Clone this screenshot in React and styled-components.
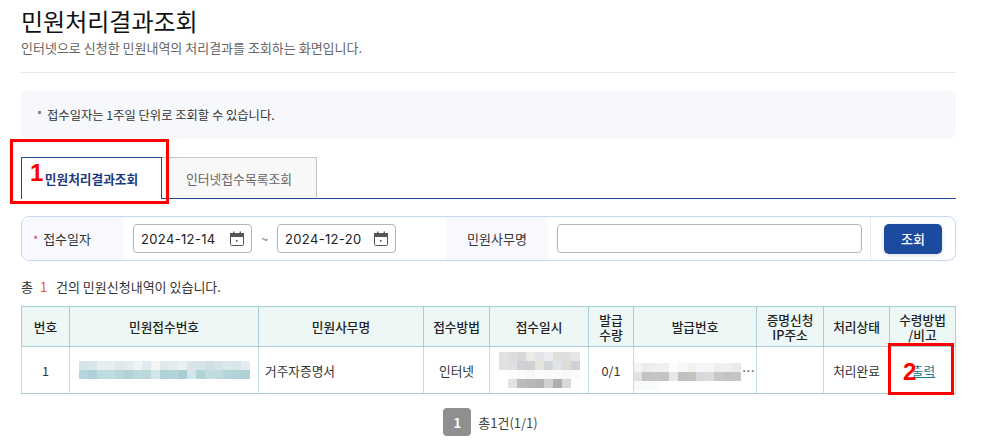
import React from "react";
import styled, { createGlobalStyle } from "styled-components";

const Global = createGlobalStyle`
  html, body { margin: 0; padding: 0; background: #fff; }
  body { font-family: "Noto Sans CJK KR", "Noto Sans", sans-serif; color: #333; }
`;
const Page = styled.div`
  position: relative;
  width: 985px;
  height: 445px;
  overflow: hidden;
  padding: 0 29px 0 21px;
  box-sizing: border-box;
`;
const Title = styled.h1`
  margin: 0;
  padding-top: 3px;
  font-size: 24px;
  line-height: 36px;
  font-weight: 400;
  color: #111;
`;
const Sub = styled.p`
  margin: 0;
  font-size: 13px;
  line-height: 18px;
  color: #666;
`;
const Rule = styled.hr`
  margin: 15px 0 0;
  border: 0;
  border-top: 1px solid #e6e6e6;
`;
const Info = styled.div`
  margin-top: 17px;
  height: 49px;
  background: #f7f8fc;
  border-radius: 8px;
  display: flex;
  align-items: center;
  padding-left: 17px;
  gap: 6px;
  font-size: 12.3px;
  color: #333;
`;
const Dot = styled.span`
  width: 3px;
  height: 3px;
  background: #888;
  margin-bottom: 4px;
`;
const Tabs = styled.div`
  margin-top: 18px;
  height: 42px;
  display: flex;
  box-sizing: border-box;
  border-bottom: 1px solid #1c4a9f;
`;
const Tab = styled.div`
  height: 42px;
  box-sizing: border-box;
  display: flex;
  align-items: center;
  justify-content: center;
  border: 1px solid ${p => (p.$active ? "#1c4a9f" : "#c4c4c4")};
  border-left-width: ${p => (p.$active ? "1px" : "0")};
  border-bottom: ${p => (p.$active ? "0" : "1px solid #1c4a9f")};
  background: ${p => (p.$active ? "#fff" : "#f8f8f8")};
  color: ${p => (p.$active ? "#1c3a80" : "#666")};
  font-size: ${p => (p.$active ? "12.7px" : "12.8px")};
  font-weight: ${p => (p.$active ? 700 : 400)};
  width: ${p => p.$w}px;
`;
const SearchBar = styled.div`
  margin-top: 17px;
  height: 45px;
  box-sizing: border-box;
  border: 1px solid #c6d6f2;
  border-radius: 8px;
  display: flex;
  align-items: stretch;
  overflow: hidden;
  font-size: 13px;
  color: #333;
`;
const Label = styled.div`
  width: ${p => p.$w}px;
  flex: none;
  background: #f8f9fe;
  display: flex;
  align-items: center;
  justify-content: ${p => (p.$center ? "center" : "flex-start")};
  padding-left: ${p => (p.$center ? "0" : "11px")};
  box-sizing: border-box;
  gap: 5px;
`;
const Star = styled.span`
  color: #e8326f;
  font-size: 11px;
`;
const DateGroup = styled.div`
  width: 322px;
  flex: none;
  display: flex;
  align-items: center;
  padding-left: 9px;
  box-sizing: border-box;
`;
const Tilde = styled.span`
  width: 25px;
  text-align: center;
  font-size: 12px;
  color: #555;
`;
const DateInput = styled.div`
  width: 119px;
  height: 29px;
  box-sizing: border-box;
  border: 1px solid #b4b4b4;
  border-radius: 4px;
  display: flex;
  align-items: center;
  justify-content: space-between;
  padding: 0 6px 0 7px;
  font-family: "Inter", "Noto Sans", sans-serif;
  font-size: 13px;
  letter-spacing: 0.35px;
  color: #222;
`;
const TextCell = styled.div`
  width: 323px;
  flex: none;
  display: flex;
  align-items: center;
  padding: 0 8px 0 9px;
  box-sizing: border-box;
  border-right: 1px solid #e6e9f0;
`;
const TextBox = styled.div`
  flex: 1;
  height: 29px;
  box-sizing: border-box;
  border: 1px solid #b4b4b4;
  border-radius: 4px;
`;
const ButtonCell = styled.div`
  flex: 1;
  display: flex;
  align-items: center;
  padding-left: 13px;
`;
const SearchButton = styled.button`
  width: 58px;
  height: 30px;
  border: 0;
  border-radius: 5px;
  background: #1c4a9f;
  color: #fff;
  font: 500 13px "Noto Sans CJK KR", sans-serif;
  box-shadow: 0 1px 4px rgba(28, 74, 159, 0.2);
`;
const Summary = styled.p`
  margin: 17px 0 0;
  font-size: 13px;
  line-height: 18px;
  color: #333;
`;
const Count = styled.span`
  color: #f0562a;
  margin: 0 6px 0 4px;
`;
const Table = styled.table`
  margin-top: 10px;
  width: 935px;
  table-layout: fixed;
  border-collapse: collapse;
  border: 1px solid #a9cdd4;
  font-size: 12.7px;
  color: #333;
`;
const Th = styled.th`
  height: 39px;
  padding: 0;
  background: #edf7f5;
  border: 1px solid #a9cdd4;
  font-weight: 500;
  font-size: 12.7px;
  line-height: 15px;
  color: #222;
`;
const Td = styled.td`
  height: 46px;
  padding: 0;
  border: 1px solid #c3e0e3;
  border-top-color: #a9cdd4;
  border-bottom-color: #a9cdd4;
  text-align: ${p => (p.$left ? "left" : "center")};
  padding-left: ${p => (p.$left ? "6px" : "0")};
  overflow: hidden;
`;
const Mosaic = styled.div`
  display: grid;
  grid-template-columns: repeat(${p => p.$cols}, 9px);
  grid-auto-rows: 9px;
  width: max-content;
  margin: ${p => p.$margin};
`;
const Cell = styled.span`
  background: ${p => p.$c};
`;
const NumWrap = styled.div`
  display: flex;
  align-items: flex-start;
`;
const More = styled.span`
  margin-left: 1px;
  margin-top: 11px;
  line-height: 18px;
  color: #555;
`;
const PrintLink = styled.a`
  color: #12808e;
  text-decoration: underline;
  margin-left: 2px;
`;
const Pagination = styled.div`
  margin-top: 14px;
  display: flex;
  align-items: center;
  justify-content: center;
  gap: 7px;
  padding-left: 4px;
  font-size: 13px;
  color: #444;
`;
const PageBox = styled.span`
  width: 28px;
  height: 28px;
  border-radius: 4px;
  background: #8f8f8f;
  color: #fff;
  display: flex;
  align-items: center;
  justify-content: center;
  font-weight: 700;
  font-size: 13px;
`;
const RedBox = styled.div`
  position: absolute;
  box-sizing: border-box;
  border: 3px solid #f00;
  left: ${p => p.$x}px;
  top: ${p => p.$y}px;
  width: ${p => p.$w}px;
  height: ${p => p.$h}px;
`;
const Mark = styled.span`
  position: absolute;
  left: ${p => p.$x}px;
  top: ${p => p.$y}px;
  font: 700 24px/24px "Liberation Sans", sans-serif;
  color: #f00;
`;

const CalendarIcon = () => (
  <svg width="16" height="16" viewBox="0 0 16 16" fill="none">
    <rect x="1.5" y="2.5" width="13" height="12" stroke="#555" rx="1" />
    <rect x="1.5" y="2.5" width="13" height="3" fill="#555" stroke="#555" />
    <rect x="4" y="0.5" width="1.4" height="3" fill="#555" />
    <rect x="10.6" y="0.5" width="1.4" height="3" fill="#555" />
    <rect x="7" y="9" width="1.6" height="1.6" fill="#555" />
  </svg>
);

const colWidths = [48, 189, 165, 66, 99, 45, 123, 67, 66, 66];
const heads = [
  "번호", "민원접수번호", "민원사무명", "접수방법", "접수일시",
  <>발급<br />수량</>, "발급번호", <>증명신청<br />IP주소</>, "처리상태", <>수령방법<br />/비고</>,
];

const m1 = [
  "#d4e4e9", "#d9e6ea", "#e9eff1", "#e6eef0", "#dfe9ec", "#e3ecee", "#eef3f4", "#e0eaee", "#f2f5f5", "#dfe9ec", "#e3ecee", "#e9f0f1", "#d7e4e8", "#d6e3e8", "#cfdfe5", "#d4e3e8", "#dce7ea", "#d8e5ea", "#e3edf0",
  "#b5d5da", "#b0d1d7", "#bedbdf", "#c0dcdf", "#b7d6db", "#b1d2d8", "#bad8dc", "#bad8dc", "#d3e5e8", "#afd1d7", "#b3d4d9", "#a9cdd4", "#d2e5e8", "#b0d2d8", "#c2dde1", "#c0dbe0", "#b3d4da", "#b1d3d8", "#aed0d6",
];
const m2 = [
  "#e2e2e4", "#dcdcde", "#d8d8da", "#eceae6", "#e2e4e8", "#eaebee", "#e0dfdc", "#dcdee0", "#e6e6e8",
  "#e2e2e4", "#e0e0e0", "#cfd1d6", "#cfd0d2", "#e6e2dc", "#d2d6da", "#e2e3e6", "#dddcd8", "#ced2d6",
  "#fff", "#fdfdfd", "#fbfbfb", "#f8f8f8", "#fbfbfa", "#fafafa", "#fafafa", "#f8f8f8", "#fbfbfb",
  "#fff", "#e4e2e0", "#bcbcbc", "#b8b8b8", "#b4b4b4", "#cfd1d3", "#aeaeae", "#d8d8da", "#fff",
];
const m3 = [
  "#f4f4f4", "#ededee", "#efeff0", "#f0f0f1", "#fdfdfd", "#f8f8f8", "#f4f2ef", "#f6f6f8", "#f6f6f8", "#efeff0", "#efeff0", "#eaeaea",
  "#e2e2e2", "#c4c2c2", "#c6c4c4", "#c4c4c8", "#e8e8e8", "#c0c0c0", "#c4c2c2", "#d8d8dc", "#dcdce0", "#c8c8c8", "#c4c4c4", "#c6c6c6",
  "#f6fafa", "#f8fbfb", "#fafcfc",
];

const Blur = ({ cells, cols, margin }) => (
  <Mosaic $cols={cols} $margin={margin}>
    {cells.map((c, i) => <Cell key={i} $c={c} />)}
  </Mosaic>
);

export default function App() {
  return (
    <Page>
      <Global />
      <Title>민원처리결과조회</Title>
      <Sub>인터넷으로 신청한 민원내역의 처리결과를 조회하는 화면입니다.</Sub>
      <Rule />
      <Info><Dot />접수일자는 1주일 단위로 조회할 수 있습니다.</Info>
      <Tabs>
        <Tab $active $w={141}>민원처리결과조회</Tab>
        <Tab $w={155}>인터넷접수목록조회</Tab>
      </Tabs>
      <SearchBar>
        <Label $w={102}><Star>*</Star>접수일자</Label>
        <DateGroup>
          <DateInput>2024-12-14<CalendarIcon /></DateInput>
          <Tilde>~</Tilde>
          <DateInput>2024-12-20<CalendarIcon /></DateInput>
        </DateGroup>
        <Label $w={102} $center>민원사무명</Label>
        <TextCell><TextBox /></TextCell>
        <ButtonCell><SearchButton>조회</SearchButton></ButtonCell>
      </SearchBar>
      <Summary>총<Count> 1 </Count>건의 민원신청내역이 있습니다.</Summary>
      <Table>
        <colgroup>{colWidths.map((w, i) => <col key={i} width={w} />)}</colgroup>
        <thead>
          <tr>{heads.map((h, i) => <Th key={i}>{h}</Th>)}</tr>
        </thead>
        <tbody>
          <tr>
            <Td>1</Td>
            <Td><Blur cells={m1} cols={19} margin="0 0 0 9px" /></Td>
            <Td $left>거주자증명서</Td>
            <Td>인터넷</Td>
            <Td><Blur cells={m2} cols={9} margin="0 auto" /></Td>
            <Td>0/1</Td>
            <Td>
              <NumWrap>
                <Blur cells={m3} cols={12} margin="12px 0 0 -1px" />
                <More>…</More>
              </NumWrap>
            </Td>
            <Td />
            <Td>처리완료</Td>
            <Td><PrintLink>출력</PrintLink></Td>
          </tr>
        </tbody>
      </Table>
      <Pagination><PageBox>1</PageBox>총1건(1/1)</Pagination>
      <RedBox $x={10} $y={139} $w={159} $h={65} />
      <Mark $x={30} $y={161}>1</Mark>
      <RedBox $x={888} $y={343} $w={66} $h={52} />
      <Mark $x={903} $y={360}>2</Mark>
    </Page>
  );
}
